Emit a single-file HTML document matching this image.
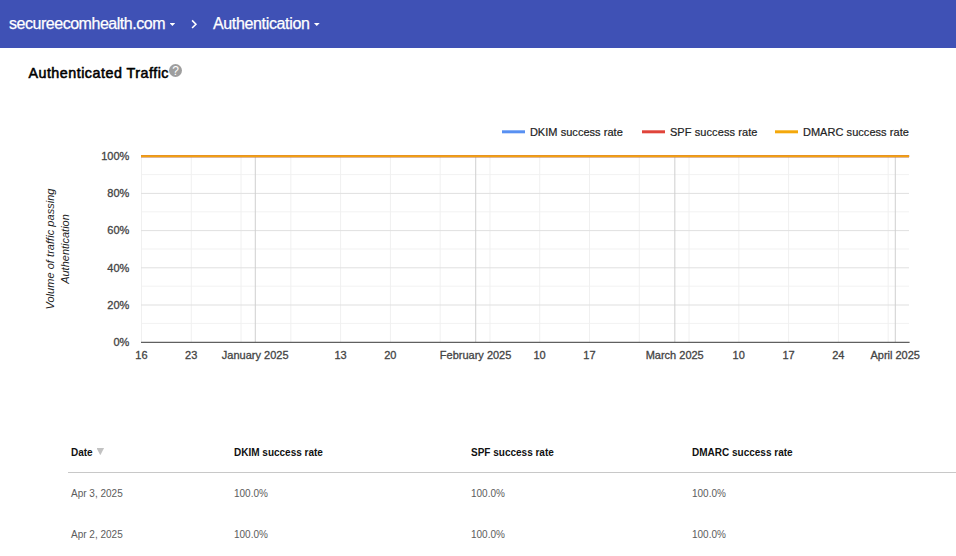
<!DOCTYPE html>
<html><head><meta charset="utf-8">
<style>
html,body{margin:0;padding:0;background:#fff;}
body{width:956px;height:556px;overflow:hidden;position:relative;font-family:"Liberation Sans",sans-serif;}
#bar{position:absolute;left:0;top:0;width:956px;height:48px;background:#3f51b5;}
#bar span{position:absolute;color:#fff;-webkit-text-stroke:0.25px #fff;font-size:16px;top:15px;line-height:18px;white-space:nowrap;}
.caret{position:absolute;width:5.8px;height:2.9px;background:#fff;clip-path:polygon(0 0,100% 0,50% 100%);top:23px;}
#title{position:absolute;left:28.4px;top:65px;font-size:14.3px;line-height:16px;letter-spacing:0.5px;font-weight:normal;-webkit-text-stroke:0.55px #000;color:#000;white-space:nowrap;}
#help{position:absolute;left:169px;top:64px;width:13px;height:13px;border-radius:50%;background:#9e9e9e;color:#fff;font-size:12px;text-align:center;line-height:15px;}
svg{position:absolute;left:0;top:0;}
.hr{position:absolute;left:68px;top:472px;width:888px;height:1px;background:#c8c8c8;}
.th{position:absolute;top:447px;font-size:10px;font-weight:bold;color:#111;white-space:nowrap;}
.td{position:absolute;font-size:10px;color:#5c5c5c;white-space:nowrap;}
.sort{position:absolute;left:96.5px;top:448px;width:7.6px;height:7.2px;background:#c2c2c2;clip-path:polygon(0 0,100% 0,50% 100%);}
</style></head><body>
<div id="bar">
<span style="left:9px;letter-spacing:-0.47px">secureecomhealth.com</span><div class="caret" style="left:169.5px"></div>
<svg width="956" height="48"><path d="M192.1 20.4 L195.9 24.2 L192.1 28" fill="none" stroke="#fff" stroke-width="1.6"/></svg>
<span style="left:213px;letter-spacing:-0.35px">Authentication</span><div class="caret" style="left:313.9px"></div>
</div>
<div id="title">Authenticated Traffic</div>
<div id="help">?</div>
<svg id="chart" width="956" height="556" font-family="Liberation Sans, Arial, sans-serif" font-size="11">
<rect x="141.0" y="322.90" width="768.0" height="1" fill="#f2f2f2"/>
<rect x="141.0" y="285.70" width="768.0" height="1" fill="#f2f2f2"/>
<rect x="141.0" y="248.50" width="768.0" height="1" fill="#f2f2f2"/>
<rect x="141.0" y="211.30" width="768.0" height="1" fill="#f2f2f2"/>
<rect x="141.0" y="174.10" width="768.0" height="1" fill="#f2f2f2"/>
<rect x="141.00" y="156.0" width="1" height="186.0" fill="#f0f0f0"/>
<rect x="190.78" y="156.0" width="1" height="186.0" fill="#f0f0f0"/>
<rect x="240.56" y="156.0" width="1" height="186.0" fill="#f0f0f0"/>
<rect x="290.33" y="156.0" width="1" height="186.0" fill="#f0f0f0"/>
<rect x="340.11" y="156.0" width="1" height="186.0" fill="#f0f0f0"/>
<rect x="389.89" y="156.0" width="1" height="186.0" fill="#f0f0f0"/>
<rect x="439.67" y="156.0" width="1" height="186.0" fill="#f0f0f0"/>
<rect x="489.44" y="156.0" width="1" height="186.0" fill="#f0f0f0"/>
<rect x="539.22" y="156.0" width="1" height="186.0" fill="#f0f0f0"/>
<rect x="589.00" y="156.0" width="1" height="186.0" fill="#f0f0f0"/>
<rect x="638.78" y="156.0" width="1" height="186.0" fill="#f0f0f0"/>
<rect x="688.56" y="156.0" width="1" height="186.0" fill="#f0f0f0"/>
<rect x="738.33" y="156.0" width="1" height="186.0" fill="#f0f0f0"/>
<rect x="788.11" y="156.0" width="1" height="186.0" fill="#f0f0f0"/>
<rect x="837.89" y="156.0" width="1" height="186.0" fill="#f0f0f0"/>
<rect x="887.67" y="156.0" width="1" height="186.0" fill="#f0f0f0"/>
<rect x="141.0" y="304.50" width="768.0" height="1" fill="#e0e0e0"/>
<rect x="141.0" y="267.30" width="768.0" height="1" fill="#e0e0e0"/>
<rect x="141.0" y="230.10" width="768.0" height="1" fill="#e0e0e0"/>
<rect x="141.0" y="192.90" width="768.0" height="1" fill="#e0e0e0"/>
<rect x="141.0" y="155.70" width="768.0" height="1" fill="#e0e0e0"/>
<rect x="254.78" y="156.0" width="1" height="186.0" fill="#cfcfcf"/>
<rect x="475.22" y="156.0" width="1" height="186.0" fill="#cfcfcf"/>
<rect x="674.33" y="156.0" width="1" height="186.0" fill="#cfcfcf"/>
<rect x="894.78" y="156.0" width="1" height="186.0" fill="#cfcfcf"/>
<rect x="141.0" y="341.8" width="768.6" height="1" fill="#3a3a3a"/>
<path d="M141.0 156.25 L909.1 156.25" stroke="#5890f2" stroke-width="2.1" fill="none"/>
<path d="M141.0 156.25 L909.1 156.25" stroke="#e0443a" stroke-width="2.1" fill="none"/>
<path d="M141.0 156.25 L909.1 156.25" stroke="#f3a40c" stroke-width="2.1" fill="none"/>
<text x="129.3" y="346.0" text-anchor="end" fill="#444444" stroke="#444444" stroke-width="0.3">0%</text>
<text x="129.3" y="308.8" text-anchor="end" fill="#444444" stroke="#444444" stroke-width="0.3">20%</text>
<text x="129.3" y="271.6" text-anchor="end" fill="#444444" stroke="#444444" stroke-width="0.3">40%</text>
<text x="129.3" y="234.4" text-anchor="end" fill="#444444" stroke="#444444" stroke-width="0.3">60%</text>
<text x="129.3" y="197.2" text-anchor="end" fill="#444444" stroke="#444444" stroke-width="0.3">80%</text>
<text x="129.3" y="160.0" text-anchor="end" fill="#444444" stroke="#444444" stroke-width="0.3">100%</text>
<text x="141.4" y="359" text-anchor="middle" fill="#444444" stroke="#444444" stroke-width="0.3">16</text>
<text x="191.2" y="359" text-anchor="middle" fill="#444444" stroke="#444444" stroke-width="0.3">23</text>
<text x="340.5" y="359" text-anchor="middle" fill="#444444" stroke="#444444" stroke-width="0.3">13</text>
<text x="390.3" y="359" text-anchor="middle" fill="#444444" stroke="#444444" stroke-width="0.3">20</text>
<text x="539.6" y="359" text-anchor="middle" fill="#444444" stroke="#444444" stroke-width="0.3">10</text>
<text x="589.4" y="359" text-anchor="middle" fill="#444444" stroke="#444444" stroke-width="0.3">17</text>
<text x="738.7" y="359" text-anchor="middle" fill="#444444" stroke="#444444" stroke-width="0.3">10</text>
<text x="788.5" y="359" text-anchor="middle" fill="#444444" stroke="#444444" stroke-width="0.3">17</text>
<text x="838.3" y="359" text-anchor="middle" fill="#444444" stroke="#444444" stroke-width="0.3">24</text>
<text x="255.2" y="359" text-anchor="middle" fill="#444444" stroke="#444444" stroke-width="0.3">January 2025</text>
<text x="475.6" y="359" text-anchor="middle" fill="#444444" stroke="#444444" stroke-width="0.3">February 2025</text>
<text x="674.7" y="359" text-anchor="middle" fill="#444444" stroke="#444444" stroke-width="0.3">March 2025</text>
<text x="895.2" y="359" text-anchor="middle" fill="#444444" stroke="#444444" stroke-width="0.3">April 2025</text>
<rect x="502" y="130.3" width="23" height="3" fill="#5890f2"/>
<text x="529.9" y="136" fill="#222222" stroke="#222222" stroke-width="0.2" letter-spacing="0.04">DKIM success rate</text>
<rect x="642" y="130.3" width="23" height="3" fill="#e0443a"/>
<text x="669.9" y="136" fill="#222222" stroke="#222222" stroke-width="0.2" letter-spacing="0.09">SPF success rate</text>
<rect x="775" y="130.3" width="23" height="3" fill="#f4a80b"/>
<text x="802.9" y="136" fill="#222222" stroke="#222222" stroke-width="0.2" letter-spacing="0.05">DMARC success rate</text>
<g font-style="italic" fill="#222222" font-size="11"><text transform="translate(54,249) rotate(-90)" text-anchor="middle" letter-spacing="0.04">Volume of traffic passing</text><text transform="translate(69,249) rotate(-90)" text-anchor="middle">Authentication</text></g>
</svg>
<div id="tbl">
<div class="hr"></div>
<div class="th" style="left:71px">Date</div>
<div class="th" style="left:234px">DKIM success rate</div>
<div class="th" style="left:471px">SPF success rate</div>
<div class="th" style="left:692px">DMARC success rate</div>
<div class="sort"></div>
<div class="td" style="left:71px;top:488px">Apr 3, 2025</div>
<div class="td" style="left:234px;top:488px">100.0%</div>
<div class="td" style="left:471px;top:488px">100.0%</div>
<div class="td" style="left:692px;top:488px">100.0%</div>
<div class="td" style="left:71px;top:529px">Apr 2, 2025</div>
<div class="td" style="left:234px;top:529px">100.0%</div>
<div class="td" style="left:471px;top:529px">100.0%</div>
<div class="td" style="left:692px;top:529px">100.0%</div>
</div>
</body></html>
